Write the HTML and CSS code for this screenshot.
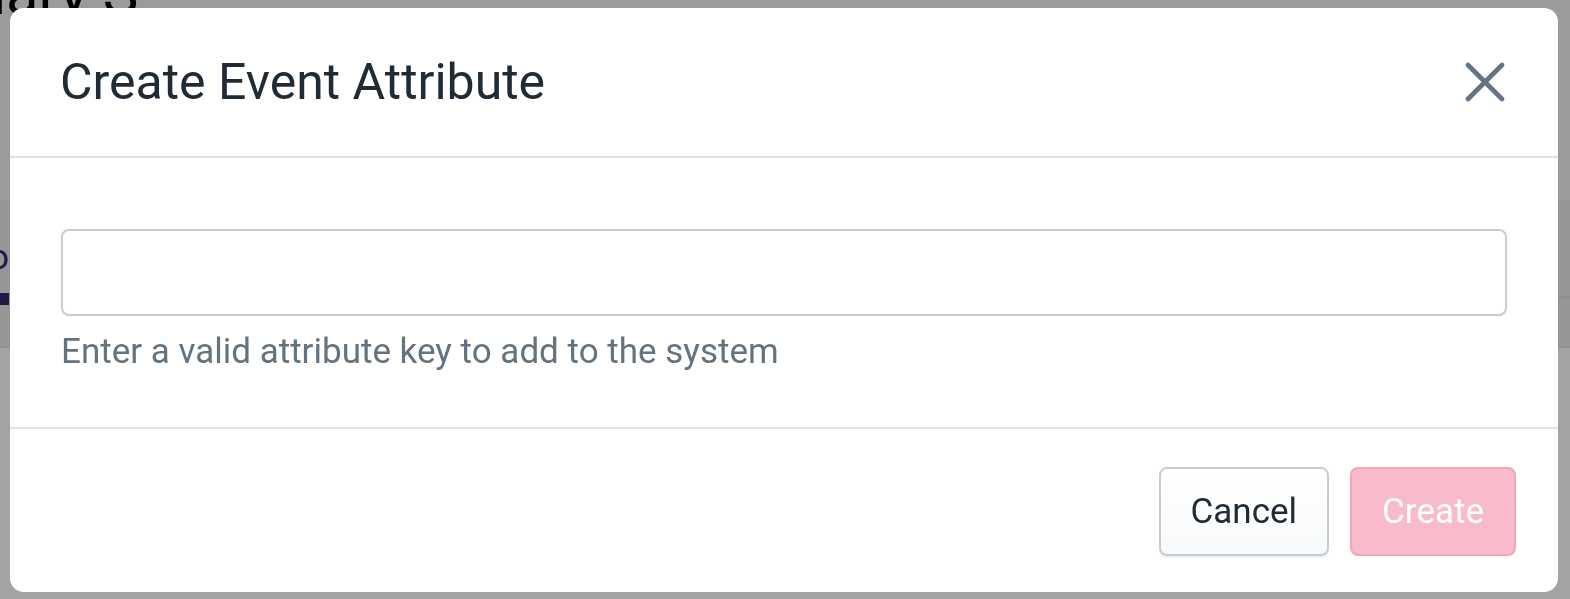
FILE: index.html
```html
<!DOCTYPE html>
<html lang="en">
<head>
<meta charset="utf-8">
<title>Create Event Attribute</title>
<link rel="stylesheet" href="styles.css">
</head>
<body>
<div class="page">
  <div class="page-top">
    <h1 class="page-title">Summary S</h1>
  </div>
  <div class="page-tabs">
    <div class="tab-bar">
      <div class="tab active">Info</div>
    </div>
  </div>
  <div class="page-rest"></div>
</div>

<div class="backdrop"></div>

<div class="modal" role="dialog" aria-labelledby="modal-title">
  <div class="modal-header">
    <h2 class="modal-title" id="modal-title">Create Event Attribute</h2>
    <button class="close-btn" aria-label="Close">
      <svg width="40" height="40" viewBox="0 0 40 40" fill="none" stroke="currentColor" stroke-width="4.6" stroke-linecap="round">
        <line x1="3" y1="3" x2="37" y2="37"/>
        <line x1="37" y1="3" x2="3" y2="37"/>
      </svg>
    </button>
  </div>
  <div class="modal-body">
    <input class="text-input" type="text" aria-label="Attribute key">
    <p class="help-text">Enter a valid attribute key to add to the system</p>
  </div>
  <div class="modal-footer">
    <button class="btn btn-secondary">Cancel</button>
    <button class="btn btn-primary" disabled>Create</button>
  </div>
</div>
</body>
</html>
```

FILE: styles.css
```css
* { box-sizing: border-box; }

html, body {
  margin: 0;
  padding: 0;
  height: 100%;
  overflow: hidden;
}

body {
  font-family: Roboto, "Liberation Sans", Arial, sans-serif;
  background: #fbfbfb;
}

/* background page */
.page {
  display: flex;
  flex-direction: column;
  height: 100%;
}

.page-top {
  height: 200px;
  background: #eeeeee;
  overflow: hidden;
}

.page-title {
  margin: -36px 0 0 -168px;
  font-size: 60px;
  line-height: 60px;
  font-weight: 400;
  color: #000;
  white-space: nowrap;
}

.page-tabs {
  height: 148px;
  background: #e6e6e6;
  border-bottom: 1px solid #dadada;
  padding-top: 28px;
}

.tab-bar {
  height: 70px;
  border-bottom: 2px solid #dcdcdc;
  display: flex;
}

.tab {
  margin-left: -52px;
  height: 77px;
  font-size: 35px;
  line-height: 40px;
  padding-top: 10px;
  color: #2e2a73;
  border-bottom: 12px solid #2e2a73;
}

.page-rest {
  flex: 1;
  background: #fbfbfb;
}

.backdrop {
  position: fixed;
  inset: 0;
  background: rgba(0, 0, 0, 0.35);
}

/* modal */
.modal {
  position: fixed;
  left: 10px;
  top: 8px;
  width: 1548px;
  height: 584px;
  background: #ffffff;
  border-radius: 14px;
  display: flex;
  flex-direction: column;
  overflow: hidden;
}

.modal-header {
  height: 150px;
  flex: none;
  display: flex;
  align-items: center;
  justify-content: space-between;
  padding: 0 53px 0 50px;
  border-bottom: 2px solid #dfe3e8;
}

.modal-title {
  margin: 0;
  font-size: 50px;
  font-weight: 400;
  line-height: 60px;
  color: #212b36;
}

.close-btn {
  border: 0;
  background: none;
  padding: 0;
  width: 40px;
  height: 40px;
  color: #637381;
  cursor: pointer;
  display: flex;
}

.modal-body {
  flex: none;
  height: 271px;
  padding: 71px 51px 0 51px;
  border-bottom: 2px solid #dfe3e8;
}

.text-input {
  display: block;
  width: 100%;
  height: 87px;
  border: 2px solid #c4cdd5;
  border-radius: 8px;
  background: #fff;
  font: inherit;
  font-size: 35px;
  padding: 0 28px;
  color: #212b36;
  outline: none;
}

.help-text {
  margin: 10px 0 0 0;
  font-size: 35px;
  line-height: 52px;
  color: #637381;
}

.modal-footer {
  flex: 1;
  display: flex;
  justify-content: flex-end;
  align-items: flex-start;
  gap: 21px;
  padding: 38px 42px 0 0;
}

.btn {
  height: 89px;
  border-radius: 8px;
  border: 2px solid;
  font-family: inherit;
  font-size: 35px;
  padding: 0 30px;
  display: flex;
  align-items: center;
  cursor: pointer;
}

.btn-secondary {
  background: linear-gradient(180deg, #ffffff, #f9fafb);
  border-color: #c4cdd5;
  color: #212b36;
  box-shadow: 0 2px 1px rgba(22, 29, 37, 0.06);
}

.btn-primary {
  background: #f8bbca;
  border-color: #f5a4b9;
  color: #ffffff;
}
```
